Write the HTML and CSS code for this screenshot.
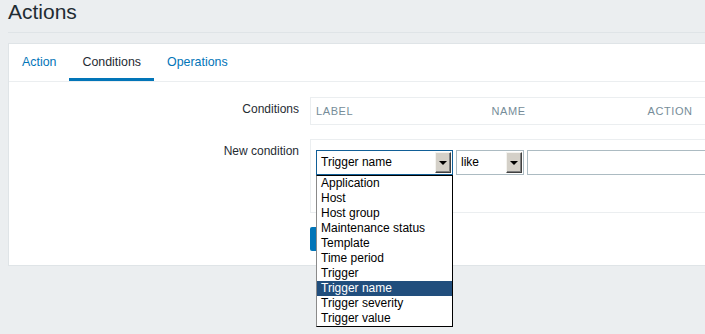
FILE: index.html
```html
<!DOCTYPE html>
<html lang="en">

<head>
    <meta charset="UTF-8">
    <title>Actions</title>
    <link rel="stylesheet" href="styles.css">
</head>

<body>
    <!-- page header -->
    <header class="header">
        <h1>Actions</h1>
    </header>

    <div class="panel">
        <!-- tabs -->
        <ul class="tabs">
            <li><a href="#">Action</a></li>
            <li class="active"><a href="#">Conditions</a></li>
            <li><a href="#">Operations</a></li>
        </ul>

        <!-- form -->
        <div class="form">
            <div class="rowLabel">Conditions</div>
            <div class="rowField">
                <table class="condTable">
                    <thead>
                        <tr>
                            <th class="colLabel">Label</th>
                            <th class="colName">Name</th>
                            <th class="colAction">Action</th>
                        </tr>
                    </thead>
                </table>
            </div>

            <div class="rowLabel">New condition</div>
            <div class="rowField">
                <div class="condBox">
                    <div class="condInputs">
                        <div class="selectWrap">
                            <div class="select focused">
                                <span class="selectText">Trigger name</span>
                                <span class="selectBtn"><i class="arrow"></i></span>
                            </div>
                            <!-- open list of the select -->
                            <ul class="dropList">
                                <li>Application</li>
                                <li>Host</li>
                                <li>Host group</li>
                                <li>Maintenance status</li>
                                <li>Template</li>
                                <li>Time period</li>
                                <li>Trigger</li>
                                <li class="selected">Trigger name</li>
                                <li>Trigger severity</li>
                                <li>Trigger value</li>
                            </ul>
                        </div>
                        <div class="select small">
                            <span class="selectText">like</span>
                            <span class="selectBtn"><i class="arrow"></i></span>
                        </div>
                        <input class="textInput" type="text">
                    </div>
                </div>
            </div>

            <div class="rowLabel"></div>
            <div class="rowField">
                <!-- button label is covered by the open list -->
                <button class="addBtn" type="button" aria-label="Add"></button>
            </div>
        </div>
    </div>
</body>

</html>
```

FILE: styles.css
```css
/* reset */
* {
    box-sizing: border-box;
}

body,
ul,
li,
h1,
table,
th {
    margin: 0;
    padding: 0;
}

li {
    list-style: none;
}

/* layout */
html {
    font-family: 'Liberation Sans', Arial, sans-serif;
    font-size: 12px;
    color: #1f2c33;
}

body {
    width: 705px;
    height: 334px;
    overflow: hidden;
    background-color: #ebeef0;
}

.header {
    height: 33px;
    margin: 0 0 10px 8px;
    border-bottom: 1px solid #dfe4e7;
}

.header h1 {
    font-size: 21px;
    font-weight: 400;
    line-height: 24px;
    color: #1f2c33;
}

.panel {
    width: 760px;
    margin-left: 8px;
    padding-bottom: 14px;
    border: 1px solid #dfe4e7;
    background-color: #FFFFFF;
}

/* tabs */
.tabs {
    display: flex;
    border-bottom: 1px solid #ebeef0;
}

.tabs a {
    display: block;
    padding: 2px 13px 0;
    font-size: 12.4px;
    line-height: 32px;
    border-bottom: 3px solid transparent;
    color: #0275b8;
    text-decoration: none;
}

.tabs .active a {
    margin-bottom: -1px;
    border-bottom-color: #0275b8;
    color: #1f2c33;
}

/* form */
.form {
    display: grid;
    grid-template-columns: 290px 1fr;
    column-gap: 11px;
    row-gap: 14px;
    padding-top: 15px;
}

.rowLabel {
    padding-top: 5px;
    text-align: right;
    line-height: 14px;
}

.condTable {
    border-collapse: collapse;
    border: 1px solid #ebeef0;
    width: 420px;
}

.condTable th {
    height: 27px;
    padding: 0 5px;
    font-size: 11px;
    font-weight: 400;
    letter-spacing: 0.6px;
    text-align: left;
    text-transform: uppercase;
    color: #768d99;
}

.condTable .colLabel {
    width: 176px;
}

.condTable .colName {
    width: 156px;
}

.condBox {
    height: 74px;
    padding: 10px 5px;
    border: 1px solid #ebeef0;
}

.condInputs {
    display: flex;
    gap: 3px;
}

/* old style selects */
.selectWrap {
    position: relative;
}

.select {
    display: flex;
    align-items: stretch;
    width: 137px;
    height: 25px;
    padding: 1px;
    border: 1px solid #acbbc2;
    background-color: #FFFFFF;
}

.select.focused {
    border-color: #115f97;
}

.select.small {
    width: 68px;
}

.selectText {
    flex-grow: 1;
    padding-left: 3px;
    line-height: 21px;
    color: #000000;
}

.selectBtn {
    display: flex;
    align-items: center;
    justify-content: center;
    width: 16px;
    border: 1px solid;
    border-color: #f4f3ef #404040 #404040 #f4f3ef;
    box-shadow: inset -1px -1px 0 #808080;
    background-color: #d4d0c8;
}

.arrow {
    width: 0;
    height: 0;
    border-top: 4px solid #000000;
    border-right: 4px solid transparent;
    border-left: 4px solid transparent;
}

.textInput {
    width: 200px;
    height: 25px;
    border: 1px solid #acbbc2;
    margin: 0;
}

.dropList {
    position: absolute;
    top: 25px;
    left: 0;
    z-index: 2;
    width: 137px;
    border: 1px solid #000000;
    border-left-color: #8a8a8a;
    background-color: #FFFFFF;
}

.dropList li {
    height: 15px;
    padding-left: 4px;
    line-height: 15px;
    color: #000000;
}

.dropList .selected {
    background-color: #214e7d;
    color: #FFFFFF;
}

.addBtn {
    display: block;
    width: 60px;
    height: 24px;
    border: none;
    border-radius: 2px;
    background-color: #0275b8;
}
```
